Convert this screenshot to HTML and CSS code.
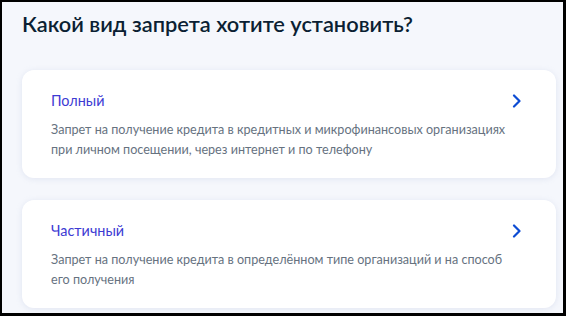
FILE: index.html
```html
<!DOCTYPE html>
<html lang="ru">
<head>
  <meta charset="UTF-8">
  <title>Вид запрета</title>
  <link rel="stylesheet" href="styles.css">
</head>
<body>
<div class="frame">
  <h1>Какой вид запрета хотите установить?</h1>

  <div class="option">
    <div class="option-head">
      <span class="option-title">Полный</span>
      <svg class="chevron" width="10" height="14" viewBox="0 0 10 14"><path d="M2 1.5 L7.5 7 L2 12.5" fill="none" stroke="#0d4cd3" stroke-width="2.2" stroke-linecap="round" stroke-linejoin="round"/></svg>
    </div>
    <p class="option-text">Запрет на получение кредита в кредитных и микрофинансовых организациях<br>при личном посещении, через интернет и по телефону</p>
  </div>

  <div class="option">
    <div class="option-head">
      <span class="option-title">Частичный</span>
      <svg class="chevron" width="10" height="14" viewBox="0 0 10 14"><path d="M2 1.5 L7.5 7 L2 12.5" fill="none" stroke="#0d4cd3" stroke-width="2.2" stroke-linecap="round" stroke-linejoin="round"/></svg>
    </div>
    <p class="option-text">Запрет на получение кредита в определённом типе организаций и на способ<br>его получения</p>
  </div>
</div>
</body>
</html>
```

FILE: styles.css
```css
html, body {
  margin: 0;
  padding: 0;
}
body {
  font-family: Lato, "Noto Sans", sans-serif;
}
.frame {
  box-sizing: border-box;
  width: 566px;
  height: 316px;
  border-style: solid;
  border-color: #000;
  border-width: 2px 3px 3px 2px;
  background-color: #f5f7fc;
  padding: 8px 7px 0 20px;
  overflow: hidden;
}
h1 {
  margin: 0 0 32px 0;
  font-size: 21.8px;
  line-height: 28px;
  font-weight: 600;
  color: #0b1f33;
}
.option {
  background-color: #fff;
  border-radius: 12px;
  box-shadow: 0 1px 6px rgba(143, 160, 200, 0.2);
  padding: 21px 34px 18px 29px;
  margin-bottom: 22px;
}
.option-head {
  display: flex;
  justify-content: space-between;
  align-items: center;
  height: 20px;
}
.option-title {
  font-size: 14.4px;
  line-height: 20px;
  color: #3d3bd3;
}
.chevron {
  display: block;
}
.option-text {
  margin: 9px 0 0 0;
  font-size: 12.6px;
  line-height: 20px;
  color: #66727f;
}
```
